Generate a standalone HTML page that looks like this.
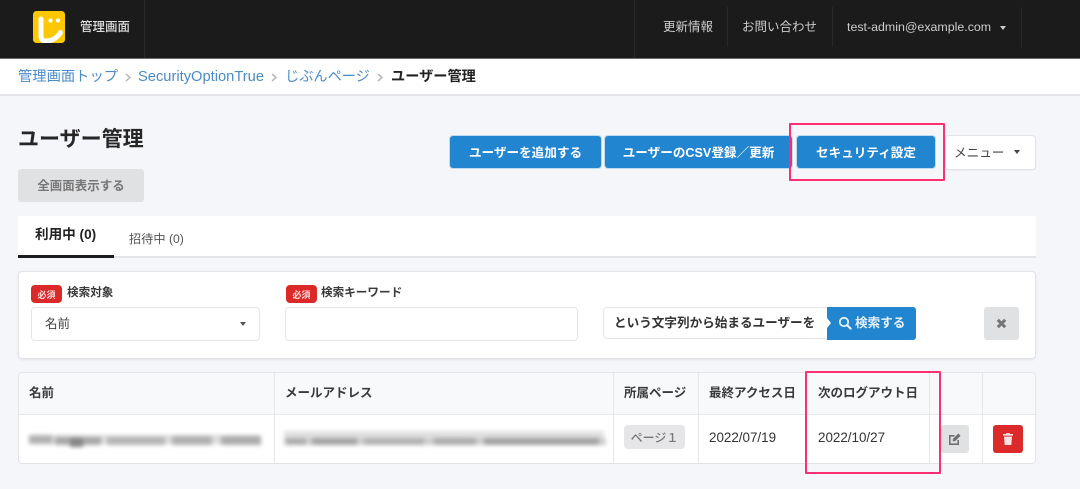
<!DOCTYPE html>
<html lang="ja"><head><meta charset="utf-8"><title>ユーザー管理</title>
<style>
*{box-sizing:border-box}
html,body{margin:0;padding:0;width:1080px;height:489px;overflow:hidden;background:#f5f6fa}
body{position:relative;font-family:"Liberation Sans","Noto Sans CJK JP",sans-serif;color:#333}
.a{position:absolute}
.t{position:absolute;white-space:nowrap;line-height:20px;height:20px}
.b{position:absolute;border-radius:3px;display:flex;align-items:center;justify-content:center;white-space:nowrap}
.blue{background:#2285d0;color:#fff;font-size:12.6px;font-weight:700;box-shadow:0 0 0 1px rgba(34,133,208,.25);padding-bottom:2px}
.hd{font-size:12.5px;font-weight:700;color:#3a3a3a}
.v{position:absolute;width:1px;background:#e6e7ea}
.dv{position:absolute;width:1px;background:#292929;top:7px;height:40px}
.badge{position:absolute;width:31px;height:18px;border-radius:4px;background:#db2828;color:#fbdcdc;font-size:9px;font-weight:700;display:flex;align-items:center;justify-content:center}
.field{position:absolute;background:#fff;border:1px solid #e5e6e9;border-radius:4px}
.pink{position:absolute;border:2px solid #fb2f72;border-radius:1px}
.blur{position:absolute;filter:blur(2.2px)}
.blur i{position:absolute;display:block}
</style></head><body>

<div class="a" style="left:0;top:0;width:1080px;height:58px;background:#1b1b1b"></div>
<div class="a" style="left:0;top:58px;width:1080px;height:1px;background:#6b6b6b"></div>
<div class="a" style="left:144px;top:0;width:1px;height:58px;background:#292929"></div>
<svg class="a" style="left:33px;top:11px" width="32" height="32" viewBox="0 0 32 32">
<defs><clipPath id="c"><rect width="32" height="32" rx="3.5"/></clipPath></defs>
<rect width="32" height="32" rx="3.5" fill="#fdc800"/>
<g clip-path="url(#c)"><path d="M8 8V25Q8 30 13 30 Q22 30 27.5 21.5" fill="none" stroke="#fff" stroke-width="5" stroke-linecap="round"/></g>
<circle cx="17.5" cy="9.5" r="2.1" fill="#fff"/><circle cx="25" cy="9.5" r="2.1" fill="#fff"/>
</svg>
<div class="t" style="left:80px;top:17px;font-size:12.5px;color:#ddd;font-weight:500">管理画面</div>
<div class="dv" style="left:634px;top:0;height:58px"></div>
<div class="dv" style="left:727px"></div>
<div class="dv" style="left:832px"></div>
<div class="dv" style="left:1021px"></div>
<div class="t" style="left:663px;top:17px;font-size:12.5px;color:#ccc">更新情報</div>
<div class="t" style="left:742px;top:17px;font-size:12.5px;color:#ccc">お問い合わせ</div>
<div class="t" style="left:847px;top:17px;font-size:12.4px;color:#ccc">test-admin@example.com</div>
<div class="a" style="left:1000px;top:26px;border:3.5px solid transparent;border-top:4px solid #ccc;border-bottom:0"></div>

<div class="a" style="left:0;top:59px;width:1080px;height:35px;background:#fff"></div>
<div class="a" style="left:0;top:94px;width:1080px;height:2px;background:#e4e5e9"></div>
<div class="t" style="left:18px;top:67px;font-size:14.3px;color:#4a8bc9">管理画面トップ</div>
<svg class="a" style="left:125px;top:73px" width="6" height="9" viewBox="0 0 6 9"><path d="M1 1L5 4.5L1 8" fill="none" stroke="#b9b9b9" stroke-width="1.5"/></svg>
<div class="t" style="left:138px;top:67px;font-size:14.7px;color:#4a8bc9">SecurityOptionTrue</div>
<svg class="a" style="left:271px;top:73px" width="6" height="9" viewBox="0 0 6 9"><path d="M1 1L5 4.5L1 8" fill="none" stroke="#b9b9b9" stroke-width="1.5"/></svg>
<div class="t" style="left:285px;top:67px;font-size:14.2px;color:#4a8bc9">じぶんページ</div>
<svg class="a" style="left:377px;top:73px" width="6" height="9" viewBox="0 0 6 9"><path d="M1 1L5 4.5L1 8" fill="none" stroke="#b9b9b9" stroke-width="1.5"/></svg>
<div class="t" style="left:391px;top:67px;font-size:14.2px;font-weight:700;color:#222">ユーザー管理</div>

<div class="t" style="left:18px;top:130px;font-size:21px;font-weight:700;color:#262626">ユーザー管理</div>
<div class="b" style="left:18px;top:169px;width:126px;height:33px;background:#e0e1e3;color:#777;font-size:12.5px;font-weight:700;padding-bottom:2px">全画面表示する</div>

<div class="b blue" style="left:450px;top:136px;width:151px;height:32px">ユーザーを追加する</div>
<div class="b blue" style="left:605px;top:136px;width:187px;height:32px">ユーザーのCSV登録／更新</div>
<div class="b blue" style="left:797px;top:136px;width:138px;height:32px">セキュリティ設定</div>
<div class="b" style="left:946px;top:136px;width:89px;height:33px;background:#fff;box-shadow:0 0 0 1px #e3e4e7,0 1px 2px rgba(0,0,0,.1);font-size:12.6px;color:#444;justify-content:flex-start;padding:0 0 2px 8px">メニュー</div>
<div class="a" style="left:1014px;top:150px;border:3.5px solid transparent;border-top:4px solid #444;border-bottom:0"></div>
<div class="pink" style="left:789px;top:123px;width:156px;height:58px"></div>

<div class="a" style="left:18px;top:216px;width:1018px;height:42px;background:#fff;border-bottom:2px solid #e3e4e8"></div>
<div class="a" style="left:18px;top:255px;width:96px;height:3px;background:#1b1c1d"></div>
<div class="t" style="left:35px;top:225px;font-size:13.6px;font-weight:700;color:#222">利用中 (0)</div>
<div class="t" style="left:129px;top:229px;font-size:12.2px;color:#555">招待中 (0)</div>

<div class="a" style="left:18px;top:271px;width:1018px;height:88px;background:#fff;border:1px solid #e3e4e7;border-radius:4px;box-shadow:0 1px 2px rgba(0,0,0,.08)"></div>
<div class="badge" style="left:31px;top:285px">必須</div>
<div class="t hd" style="left:67px;top:283px;font-size:11.6px">検索対象</div>
<div class="field" style="left:31px;top:307px;width:229px;height:34px"></div>
<div class="t" style="left:45px;top:314px;font-size:12.5px;color:#444">名前</div>
<div class="a" style="left:240px;top:322px;border:3px solid transparent;border-top:4px solid #555;border-bottom:0"></div>
<div class="badge" style="left:286px;top:285px">必須</div>
<div class="t hd" style="left:321px;top:283px;font-size:11.6px">検索キーワード</div>
<div class="field" style="left:285px;top:307px;width:293px;height:34px"></div>
<div class="field" style="left:603px;top:307px;width:230px;height:32px"></div>
<div class="t" style="left:614px;top:313px;font-size:12.6px;font-weight:700;color:#333">という文字列から始まるユーザーを</div>
<div class="a" style="left:827px;top:307px;width:89px;height:33px;background:#2285d0;border-radius:0 3px 3px 0"></div>
<div class="a" style="left:827px;top:318px;border:5px solid transparent;border-left:4px solid #fff;border-right:0"></div>
<svg class="a" style="left:838px;top:316px" width="14" height="14" viewBox="0 0 14 14"><circle cx="6" cy="6" r="4.2" fill="none" stroke="#e4f0fa" stroke-width="1.8"/><path d="M9 9L12.6 12.6" stroke="#e4f0fa" stroke-width="2.2" stroke-linecap="round"/></svg>
<div class="t" style="left:855px;top:313px;font-size:12.6px;font-weight:700;color:#e6f1fa">検索する</div>
<div class="b" style="left:984px;top:307px;width:35px;height:33px;background:#e0e1e3"></div>
<svg class="a" style="left:996px;top:318px" width="11" height="11" viewBox="0 0 11 11"><path d="M1.8 1.8L9.2 9.2M9.2 1.8L1.8 9.2" stroke="#767676" stroke-width="3"/></svg>

<div class="a" style="left:18px;top:372px;width:1018px;height:92px;background:#fff;border:1px solid #e3e4e7;border-radius:4px"></div>
<div class="a" style="left:19px;top:373px;width:1016px;height:41px;background:#f8f9fb;border-radius:3px 3px 0 0"></div>
<div class="a" style="left:19px;top:414px;width:1016px;height:1px;background:#e6e7ea"></div>
<div class="v" style="left:274px;top:373px;height:90px"></div>
<div class="v" style="left:613px;top:373px;height:90px"></div>
<div class="v" style="left:698px;top:373px;height:90px"></div>
<div class="v" style="left:806px;top:373px;height:90px"></div>
<div class="v" style="left:929px;top:373px;height:90px"></div>
<div class="v" style="left:982px;top:373px;height:90px"></div>
<div class="t hd" style="left:29px;top:383px">名前</div>
<div class="t hd" style="left:285px;top:383px">メールアドレス</div>
<div class="t hd" style="left:624px;top:383px">所属ページ</div>
<div class="t hd" style="left:709px;top:383px">最終アクセス日</div>
<div class="t hd" style="left:818px;top:383px">次のログアウト日</div>

<div class="blur" style="left:29px;top:432px;width:234px;height:18px">
<i style="left:0;top:3px;width:232px;height:9px;background:#dcdcdc"></i>
<i style="left:0;top:3px;width:23px;height:9px;background:#b0b0b0"></i>
<i style="left:26px;top:5px;width:46px;height:8px;background:#a8a8a8"></i>
<i style="left:41px;top:6px;width:13px;height:9px;background:#868686"></i>
<i style="left:78px;top:5px;width:58px;height:8px;background:#b4b4b4"></i>
<i style="left:143px;top:4px;width:40px;height:9px;background:#b0b0b0"></i>
<i style="left:192px;top:4px;width:40px;height:9px;background:#acacac"></i>
</div>
<div class="blur" style="left:284px;top:430px;width:322px;height:20px">
<i style="left:0;top:1px;width:320px;height:7px;background:#e0e0e0"></i>
<i style="left:0;top:8px;width:322px;height:7px;background:#cfcfcf"></i>
<i style="left:2px;top:8px;width:20px;height:7px;background:#acacac"></i>
<i style="left:28px;top:8px;width:45px;height:7px;background:#a2a2a2"></i>
<i style="left:80px;top:8px;width:60px;height:7px;background:#b0b0b0"></i>
<i style="left:150px;top:8px;width:42px;height:7px;background:#aaaaaa"></i>
<i style="left:200px;top:8px;width:115px;height:7px;background:#a0a0a0"></i>
</div>

<div class="b" style="left:624px;top:425px;width:61px;height:24px;background:#e6e6e8;color:#777;font-size:12px;font-weight:500;border-radius:4px">ページ１</div>
<div class="t" style="left:709px;top:428px;font-size:13.4px;color:#333">2022/07/19</div>
<div class="t" style="left:818px;top:428px;font-size:13.4px;color:#333">2022/10/27</div>
<div class="b" style="left:941px;top:425px;width:28px;height:28px;background:#e0e1e3"></div>
<svg class="a" style="left:948px;top:432px" width="14" height="14" viewBox="0 0 14 14"><path d="M10.2 8V12.2H1.8V3.8H6.5" fill="none" stroke="#6f6f6f" stroke-width="1.6"/><path d="M4.8 9.3V7L10.3 1.5L12.6 3.8L7.1 9.3Z" fill="#6f6f6f"/></svg>
<div class="b" style="left:993px;top:425px;width:30px;height:28px;background:#dc2a2a"></div>
<svg class="a" style="left:1002px;top:432px" width="12" height="14" viewBox="0 0 12 14"><path d="M1 2H4L4.7 1H7.3L8 2H11V3.6H1ZM2 4.6H10L9.3 13H2.7Z" fill="#fbe3e3"/></svg>
<div class="pink" style="left:805px;top:371px;width:136px;height:103px"></div>
</body></html>
